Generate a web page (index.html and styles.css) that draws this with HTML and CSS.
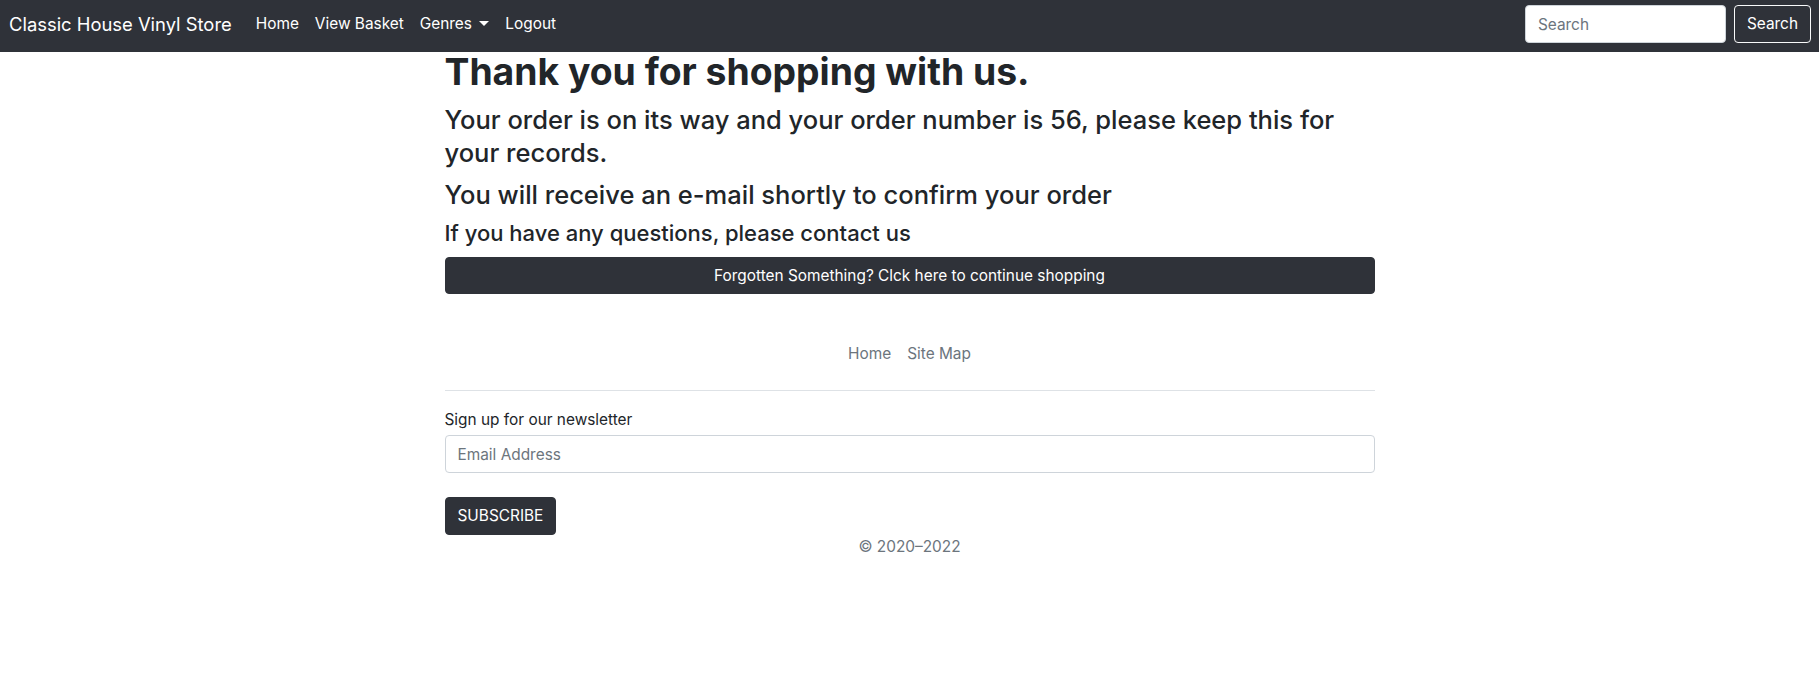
FILE: index.html
```html
<!DOCTYPE html>
<html lang="en">
<head>
<meta charset="utf-8">
<title>Classic House Vinyl Store</title>
<link rel="stylesheet" href="styles.css">
</head>
<body>
<nav class="navbar">
  <a class="brand" href="#">Classic House Vinyl Store</a>
  <ul class="nav-links">
    <li><a href="#">Home</a></li>
    <li><a href="#">View Basket</a></li>
    <li><a href="#" class="dropdown">Genres <span class="caret"></span></a></li>
    <li><a href="#">Logout</a></li>
  </ul>
  <form class="search">
    <input class="search-input" type="search" placeholder="Search">
    <button class="search-btn" type="button">Search</button>
  </form>
</nav>
<main class="container">
  <h1 class="title">Thank you for shopping with us.</h1>
  <h3 class="sub">Your order is on its way and your order number is 56, please keep this for your records.</h3>
  <h3 class="sub">You will receive an e-mail shortly to confirm your order</h3>
  <h4 class="small-head">If you have any questions, please contact us</h4>
  <a class="btn-block" href="#">Forgotten Something? Clck here to continue shopping</a>
  <footer class="footer">
    <ul class="footer-links">
      <li><a href="#">Home</a></li>
      <li><a href="#">Site Map</a></li>
    </ul>
    <form class="newsletter">
      <label class="nl-label" for="email">Sign up for our newsletter</label>
      <input id="email" class="nl-input" type="email" placeholder="Email Address">
      <button class="nl-btn" type="button">SUBSCRIBE</button>
    </form>
    <p class="copy">© 2020–2022</p>
  </footer>
</main>
</body>
</html>
```
FILE: styles.css
```css
* { box-sizing: border-box; }
body {
  margin: 0;
  font-family: Inter, "Noto Sans", sans-serif;
  font-size: 15.4px;
  line-height: 24px;
  color: #212529;
  background: #fff;
}
a { text-decoration: none; }
ul { list-style: none; margin: 0; padding: 0; }

.navbar {
  display: flex;
  align-items: center;
  height: 52px;
  padding: 0 8px 4px 9px;
  background: #2f3239;
}
.brand {
  color: #fff;
  font-size: 18.4px;
  margin-right: 16px;
  white-space: nowrap;
}
.nav-links { display: flex; }
.nav-links a {
  display: block;
  color: #fff;
  font-size: 15.4px;
  padding: 8px;
}
.caret {
  display: inline-block;
  margin-left: 3px;
  vertical-align: 3px;
  border-top: 5px solid #fff;
  border-left: 5px solid transparent;
  border-right: 5px solid transparent;
}
.search { display: flex; gap: 8px; margin-left: auto; }
.search-input {
  width: 201px;
  height: 38px;
  padding: 6px 12px;
  font: inherit;
  font-size: 15.4px;
  color: #212529;
  border: 1px solid #ced4da;
  border-radius: 4px;
  background: #fff;
}
.search-input::placeholder { color: #6c757d; }
.search-btn {
  height: 38px;
  padding: 6px 12px;
  font: inherit;
  font-size: 15.4px;
  color: #fff;
  background: transparent;
  border: 1px solid #f8f9fa;
  border-radius: 4px;
}

.container {
  width: 930px;
  margin: 0 auto;
}
.title {
  margin: 0 0 12px;
  font-size: 37.3px;
  font-weight: 700;
  line-height: 39px;
}
.sub {
  margin: 0 0 8.5px;
  font-size: 25.5px;
  font-weight: 500;
  line-height: 33.4px;
}
.small-head {
  margin: 2px 0 10px;
  font-size: 22px;
  font-weight: 500;
  line-height: 26.4px;
}
.btn-block {
  display: block;
  height: 37.5px;
  padding: 6px 12px;
  text-align: center;
  color: #fff;
  background: #2f3239;
  border: 1px solid #2f3239;
  border-radius: 4px;
}
.footer { padding-top: 48px; }
.footer-links {
  display: flex;
  justify-content: center;
  padding-bottom: 24px;
  border-bottom: 1px solid #dee2e6;
}
.footer-links a {
  display: block;
  color: #6c757d;
  padding: 0 8px;
}
.newsletter {
  display: flex;
  flex-direction: column;
  align-items: flex-start;
  padding-top: 17px;
}
.nl-label { margin-bottom: 3px; }
.nl-input {
  width: 100%;
  height: 38px;
  padding: 6px 12px;
  font: inherit;
  color: #212529;
  border: 1px solid #ced4da;
  border-radius: 4px;
}
.nl-input::placeholder { color: #6c757d; }
.nl-btn {
  margin-top: 24px;
  height: 38px;
  padding: 6px 12px;
  font: inherit;
  color: #fff;
  background: #2f3239;
  border: 1px solid #2f3239;
  border-radius: 4px;
}
.copy {
  margin: 0;
  text-align: center;
  color: #6c757d;
}
```
